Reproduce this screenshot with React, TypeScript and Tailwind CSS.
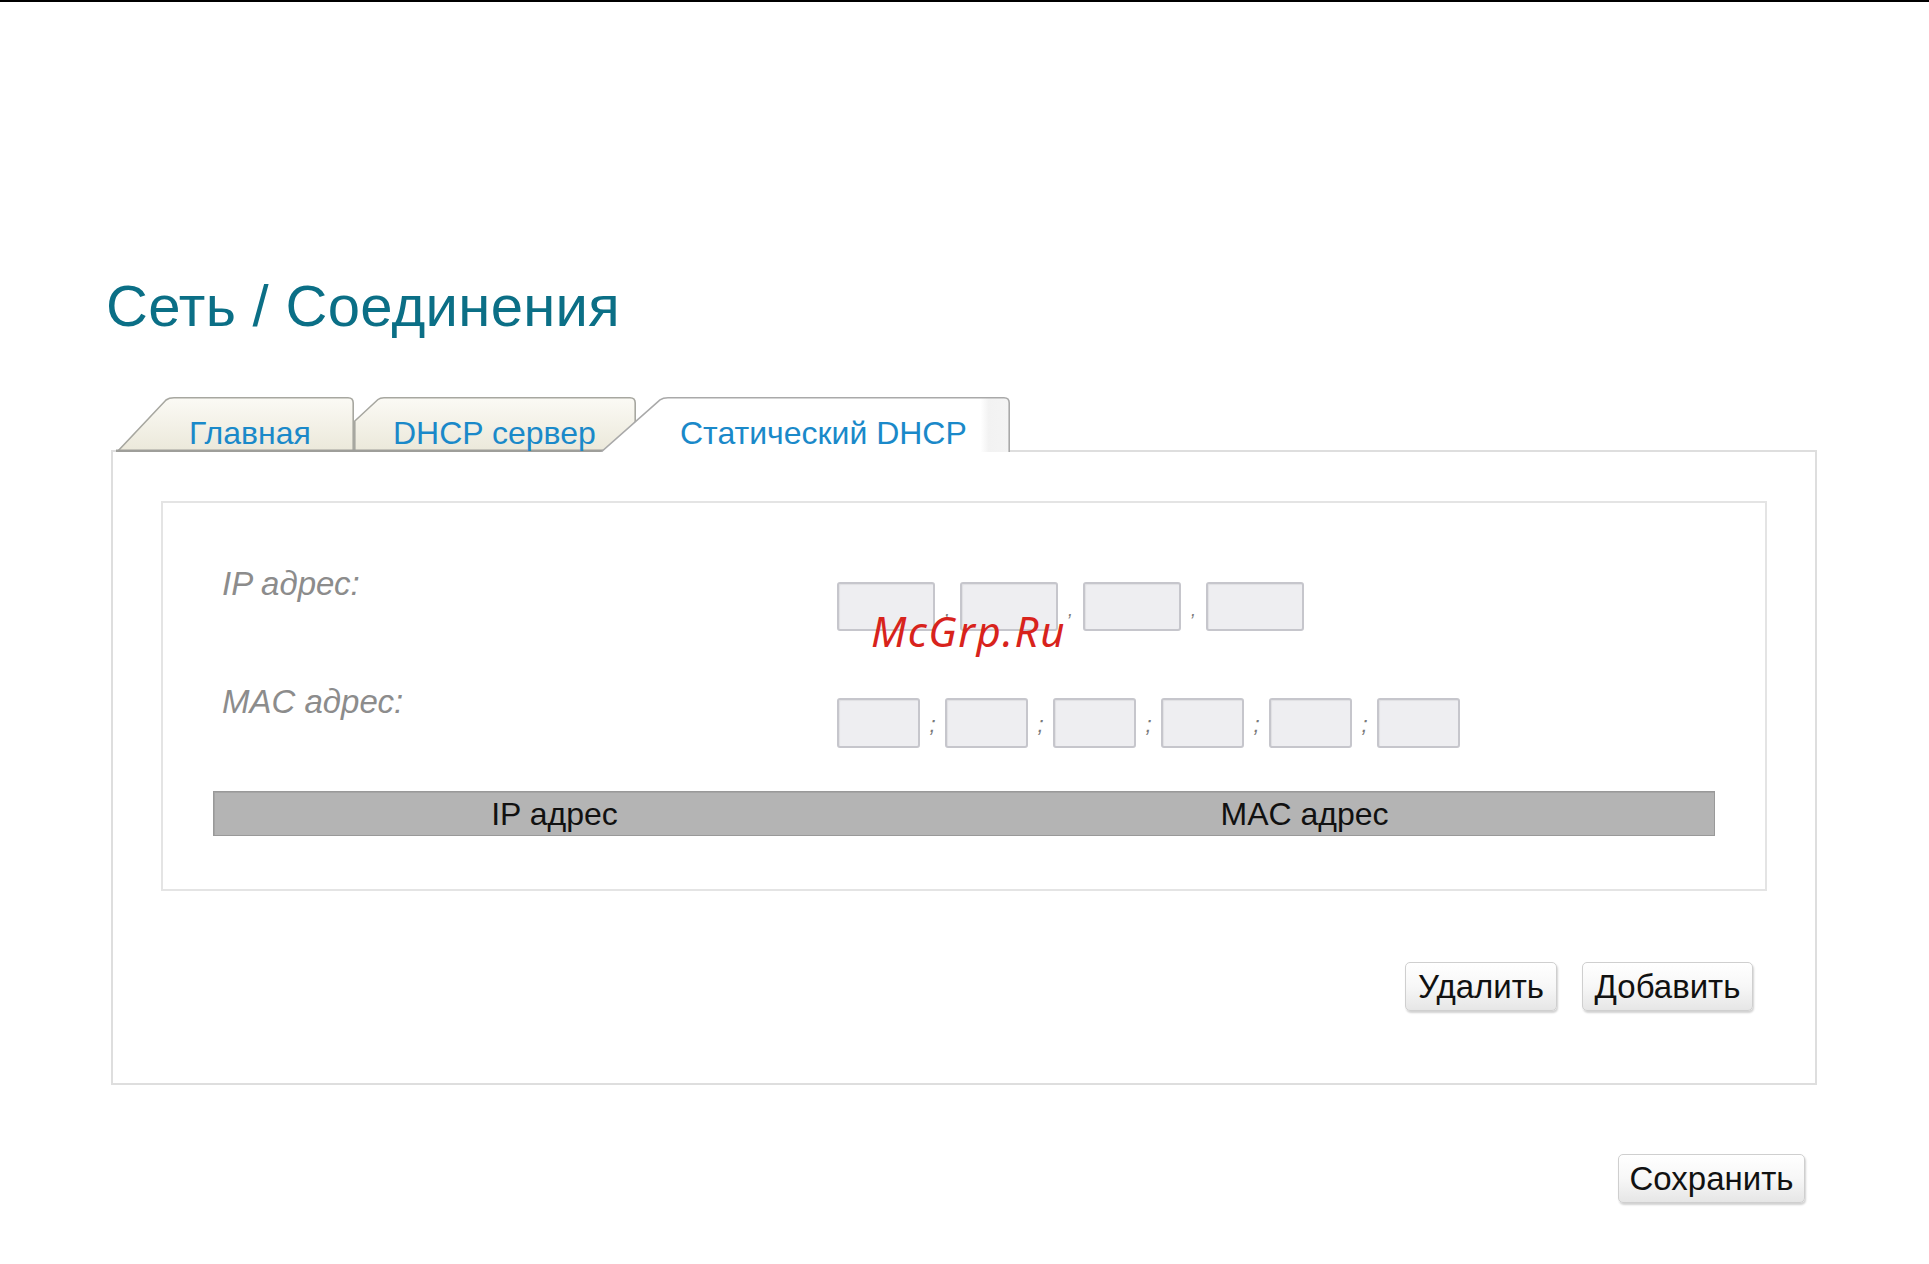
import React from 'react';

const sans = "font-['Liberation_Sans',Arial,sans-serif]";

type TabProps = {
  label: string;
  width: number;
  path: string;
  active?: boolean;
  pad: number;
  className?: string;
};

function Tab({ label, width, path, active, pad, className }: TabProps) {
  const id = `tab-${label.length}-${width}`;
  return (
    <div className={`relative h-[55px] shrink-0 ${className ?? ''}`} style={{ width }}>
      <svg className="absolute inset-0 h-full w-full" viewBox={`0 0 ${width} 55`} preserveAspectRatio="none">
        <defs>
          {active ? (
            <linearGradient id={id} x1="0" y1="0" x2="1" y2="0">
              <stop offset="0" stopColor="#ffffff" />
              <stop offset="0.93" stopColor="#ffffff" />
              <stop offset="0.95" stopColor="#f2f2f2" />
              <stop offset="1" stopColor="#f4f4f4" />
            </linearGradient>
          ) : (
            <linearGradient id={id} x1="0" y1="0" x2="0" y2="1">
              <stop offset="0" stopColor="#fbfaf5" />
              <stop offset="1" stopColor="#ebe8da" />
            </linearGradient>
          )}
        </defs>
        <path d={path + ' Z'} fill={`url(#${id})`} stroke="none" />
        <path d={path} fill="none" stroke={active ? '#a9a9a9' : '#a7a7a0'} strokeWidth="1.6" />
        {!active && <rect x="0" y="52.5" width={width} height="2.5" fill="#9e9e9a" />}
      </svg>
      <div className={`relative pt-[20px] text-[32px] leading-[32px] text-[#1a89c9] ${sans}`} style={{ paddingLeft: pad }}>
        {label}
      </div>
    </div>
  );
}

function Box({ w, h }: { w: string; h: string }) {
  return <div className={`${w} ${h} rounded-[3px] border-2 border-[#c6c6cc] bg-[#eeeef1] shadow-[inset_1px_1px_1px_rgba(0,0,0,0.06)]`} />;
}

function IpInputs() {
  const parts = [0, 1, 2, 3];
  return (
    <div className="flex items-start">
      {parts.map((i) => (
        <React.Fragment key={i}>
          {i > 0 && (
            <div className={`flex h-[49px] w-[25px] items-end justify-center pb-[12px] text-[18px] leading-[18px] text-[#7a7a7a] italic ${sans}`}>,</div>
          )}
          <Box w="w-[98px]" h="h-[49px]" />
        </React.Fragment>
      ))}
    </div>
  );
}

function MacInputs() {
  const parts = [0, 1, 2, 3, 4, 5];
  return (
    <div className="flex items-start">
      {parts.map((i) => (
        <React.Fragment key={i}>
          {i > 0 && (
            <div className={`flex h-[50px] w-[25px] items-center justify-center pt-[4px] text-[22px] leading-[22px] text-[#7a7a7a] italic ${sans}`}>;</div>
          )}
          <Box w="w-[83px]" h="h-[50px]" />
        </React.Fragment>
      ))}
    </div>
  );
}

function Btn({ children, w }: { children: React.ReactNode; w: string }) {
  return (
    <button
      className={`${w} h-[49px] rounded-[5px] border border-[#cfcfcf] bg-gradient-to-b from-white via-[#f7f7f7] to-[#e6e6e6] text-[33px] leading-[33px] text-[#111] shadow-[1px_2px_2px_rgba(0,0,0,0.18)] ${sans}`}>
      {children}
    </button>
  );
}

export default function App() {
  return (
    <div className="relative min-h-screen bg-white">
      <div className="h-[2px] bg-black" />
      <div className="pt-[275px] pl-[111px]">
        <h1 className={`-ml-[5px] text-[58px] leading-[58px] font-normal tracking-[0.3px] text-[#0b6f86] ${sans}`}>Сеть / Соединения</h1>

        <div className="relative z-10 mt-[62px] ml-[5px] flex">
          <Tab label="Главная" width={238} pad={73} path="M1 55 L50 3 Q53 0.8 58 0.8 L232 0.8 Q237.2 0.8 237.2 6 L237.2 55" />
          <Tab label="DHCP сервер" width={282} pad={39} path="M0.8 55 L0.8 24 L24 2.5 Q26 0.8 30 0.8 L276 0.8 Q281.2 0.8 281.2 6 L281.2 55" />
          <Tab
            label="Статический DHCP"
            width={410}
            pad={80}
            active
            className="-ml-[36px]"
            path="M0 56 L60 2.8 Q63 0.8 68 0.8 L404 0.8 Q409.2 0.8 409.2 6 L409.2 56"
          />
        </div>

        <div className="-mt-[2px] w-[1706px] border-2 border-[#dedede] bg-white pt-[49px] pb-[72px] pl-[48px]">
          <div className="h-[390px] w-[1606px] border-2 border-[#e4e4e4] pt-[61px]">
            <div className="flex items-start pl-[59px]">
              <div className={`w-[615px] text-[33px] leading-[40px] text-[#8c8c8c] italic ${sans}`}>IP адрес:</div>
              <div className="mt-[18px]">
                <IpInputs />
              </div>
            </div>
            <div className="mt-[51px] flex items-start pl-[59px]">
              <div className={`w-[615px] text-[33px] leading-[40px] text-[#8c8c8c] italic ${sans}`}>MAC адрес:</div>
              <div className="mt-[16px]">
                <MacInputs />
              </div>
            </div>
            <div className={`mx-[50px] mt-[43px] flex h-[45px] border border-[#999] bg-[#b4b4b4] text-[32px] leading-[32px] text-[#111] shadow-[inset_1px_1px_0_#a4a4a4] ${sans}`}>
              <div className="flex w-[681px] items-center justify-center">IP адрес</div>
              <div className="flex flex-1 items-center justify-center">MAC адрес</div>
            </div>
          </div>

          <div className="mt-[71px] flex justify-end gap-[25px] pr-[62px]">
            <Btn w="w-[152px]">Удалить</Btn>
            <Btn w="w-[171px]">Добавить</Btn>
          </div>
        </div>

        <div className="mt-[69px] flex w-[1706px] justify-end pr-[12px]">
          <Btn w="w-[187px]">Сохранить</Btn>
        </div>
      </div>

      <div className="absolute top-[609px] left-[871px] z-20 font-['Noto_Sans',sans-serif] text-[42px] leading-[44px] tracking-[1.5px] text-[#d8231c] italic">McGrp.Ru</div>
    </div>
  );
}
